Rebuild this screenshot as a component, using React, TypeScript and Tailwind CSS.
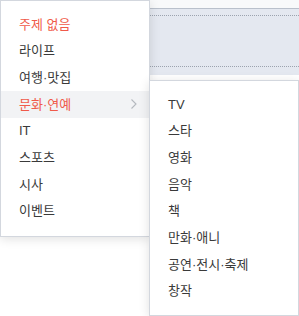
import React from "react";

const main = [
  { t: "주제 없음", red: true },
  { t: "라이프" },
  { t: "여행·맛집" },
  { t: "문화·연예", red: true, active: true, sub: true },
  { t: "IT" },
  { t: "스포츠" },
  { t: "시사" },
  { t: "이벤트" },
];

const subs = ["TV", "스타", "영화", "음악", "책", "만화·애니", "공연·전시·축제", "창작"];

export default function App() {
  return (
    <div
      className="relative w-[299px] h-[316px] bg-white overflow-hidden"
      style={{ fontFamily: '"Liberation Sans", "Noto Sans CJK KR", sans-serif' }}
    >
      <div className="h-[8px] bg-[#f8f9fa]" />
      <div className="h-[67px] border-t border-[#b9c0cb] bg-[#e4e8f0] pt-[6px]">
        <div className="h-[52px] border-y border-dotted border-[#9ca3af]" />
      </div>

      <div className="absolute left-0 top-0 w-[150px] h-[237px] bg-white border border-[#d3d7de] shadow-[0_2px_10px_rgba(0,0,0,0.12)] pt-[10px]">
        {main.map((m) => (
          <div
            key={m.t}
            className={`h-[26.67px] flex items-center pl-[18px] pr-[10px] text-[13px] ${
              m.red ? "text-[#f05a4a]" : "text-[#3a3a3a]"
            } ${m.active ? "bg-[#f2f3f5]" : ""}`}
          >
            <span className="flex-1">{m.t}</span>
            {m.sub && (
              <svg width="8" height="12" viewBox="0 0 8 12" className="mr-[1px]">
                <path d="M1.5 1.5 L6 6 L1.5 10.5" fill="none" stroke="#b4b8be" strokeWidth="1.1" />
              </svg>
            )}
          </div>
        ))}
      </div>

      <div className="absolute left-[149px] top-[80px] w-[150px] h-[236px] bg-white border border-[#d3d7de] shadow-[0_2px_10px_rgba(0,0,0,0.12)] pt-[10px]">
        {subs.map((s) => (
          <div key={s} className="h-[26.67px] flex items-center pl-[18px] text-[13px] text-[#3a3a3a]">
            {s}
          </div>
        ))}
      </div>
    </div>
  );
}
